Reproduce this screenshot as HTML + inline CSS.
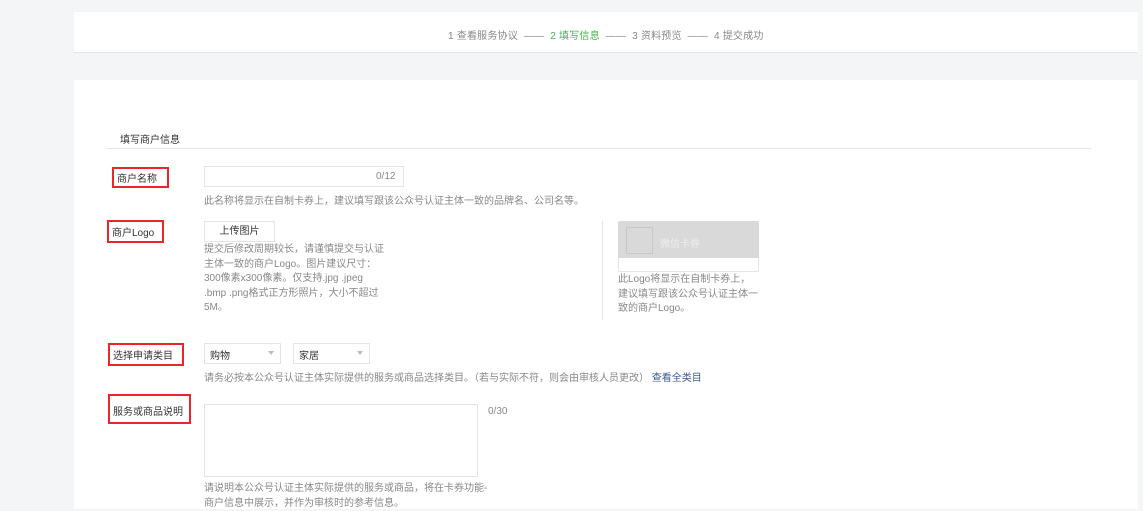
<!DOCTYPE html>
<html><head><meta charset="utf-8"><style>
*{margin:0;padding:0;box-sizing:border-box}
body{width:1143px;height:509px;background:#f4f5f6;font-family:"Liberation Sans","Noto Sans CJK SC",sans-serif;font-size:10px;color:#333;position:relative;overflow:hidden}
.a{position:absolute}
.g{color:#888}
.rb{position:absolute;border:2px solid #e8262b}
.box{position:absolute;border:1px solid #e4e4e4;background:#fff}
</style></head><body>
<div class="a" style="left:74px;top:12px;width:1064px;height:41px;background:#fff;border-bottom:1px solid #e6e7e8"></div>
<div class="a g" style="left:448px;top:27px;white-space:nowrap;font-size:10px;letter-spacing:0.2px">1 查看服务协议 &nbsp;—— &nbsp;<span style="color:#44b549">2 填写信息</span> &nbsp;—— &nbsp;3 资料预览 &nbsp;—— &nbsp;4 提交成功</div>
<div class="a" style="left:74px;top:80px;width:1064px;height:429px;background:#fff"></div>
<div class="a" style="left:120px;top:131px">填写商户信息</div>
<div class="a" style="left:106px;top:148px;width:986px;height:1px;background:#e6e6e6"></div>

<div class="rb" style="left:112px;top:167px;width:57px;height:21px"></div>
<div class="a" style="left:117px;top:170px">商户名称</div>
<div class="box" style="left:204px;top:166px;width:200px;height:21px"></div>
<div class="a g" style="left:376px;top:171px;font-size:10px">0/12</div>
<div class="a g" style="left:204px;top:192px">此名称将显示在自制卡券上，建议填写跟该公众号认证主体一致的品牌名、公司名等。</div>

<div class="rb" style="left:107px;top:220px;width:57px;height:23px"></div>
<div class="a" style="left:112px;top:224px">商户Logo</div>
<div class="box" style="left:204px;top:221px;width:71px;height:21px;text-align:center;line-height:19px">上传图片</div>
<div class="a g" style="left:204px;top:243px;width:180px;line-height:14.6px">提交后修改周期较长，请谨慎提交与认证主体一致的商户Logo。图片建议尺寸：300像素x300像素。仅支持.jpg .jpeg .bmp .png格式正方形照片，大小不超过5M。</div>
<div class="a" style="left:602px;top:221px;width:1px;height:99px;background:#e6e6e6"></div>
<div class="a" style="left:618px;top:221px;width:141px;height:51px;border:1px solid #e4e4e4;border-radius:2px;background:#fff"></div>
<div class="a" style="left:618px;top:221px;width:141px;height:37px;background:#d9d9d9;border-radius:2px 2px 0 0"></div>
<div class="a" style="left:626px;top:227px;width:27px;height:27px;border:1px solid #c8c8c8;background:#d9d9d9"></div>
<div class="a" style="left:660px;top:235px;color:#eee">微信卡券</div>
<div class="a g" style="left:618px;top:273px;width:142px;line-height:14.6px">此Logo将显示在自制卡券上，建议填写跟该公众号认证主体一致的商户Logo。</div>

<div class="rb" style="left:108px;top:343px;width:76px;height:23px"></div>
<div class="a" style="left:113px;top:347px">选择申请类目</div>
<div class="box" style="left:204px;top:343px;width:77px;height:21px;padding:3px 5px">购物<span style="position:absolute;right:6px;top:7px;border:3px solid transparent;border-top:4px solid #bbb"></span></div>
<div class="box" style="left:293px;top:343px;width:77px;height:21px;padding:3px 5px">家居<span style="position:absolute;right:6px;top:7px;border:3px solid transparent;border-top:4px solid #bbb"></span></div>
<div class="a g" style="left:204px;top:369px;white-space:nowrap">请务必按本公众号认证主体实际提供的服务或商品选择类目。（若与实际不符，则会由审核人员更改） <span style="color:#3e5a94">查看全类目</span></div>

<div class="rb" style="left:108px;top:394px;width:83px;height:30px"></div>
<div class="a" style="left:113px;top:403px">服务或商品说明</div>
<div class="box" style="left:204px;top:404px;width:274px;height:73px"></div>
<div class="a g" style="left:488px;top:406px">0/30</div>
<div class="a g" style="left:204px;top:482px;line-height:14.6px;white-space:nowrap">请说明本公众号认证主体实际提供的服务或商品，将在卡券功能-<br>商户信息中展示，并作为审核时的参考信息。</div>
</body></html>
